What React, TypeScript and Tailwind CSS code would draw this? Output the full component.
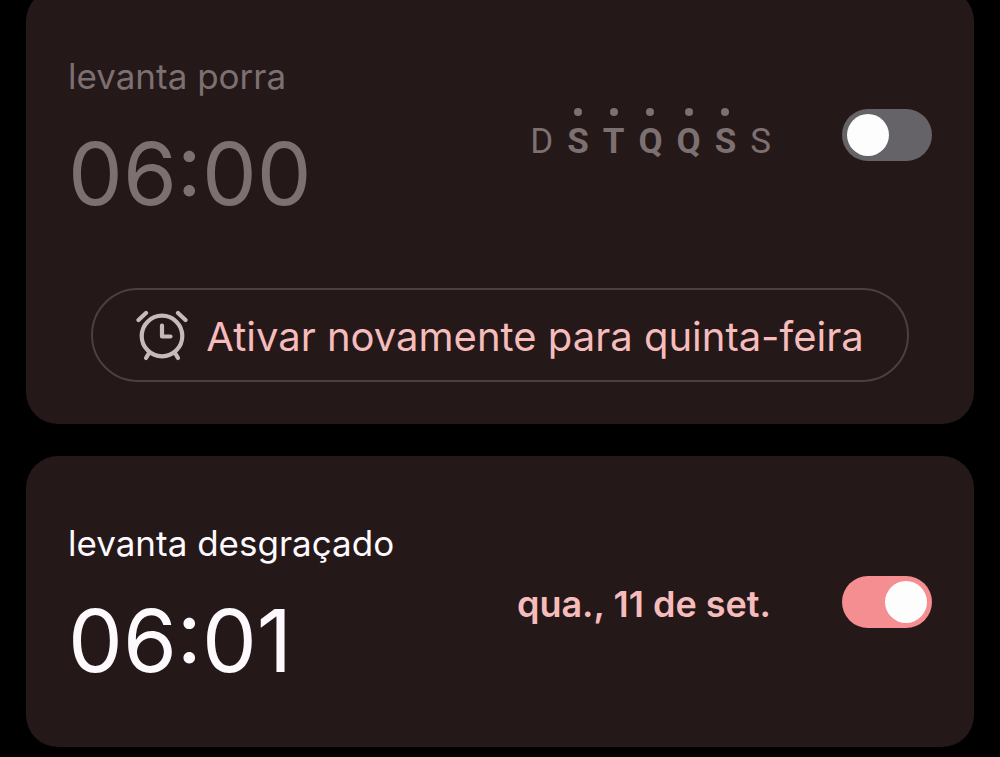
import { useState } from "react";

const days = [
  { letter: "D", name: "domingo", on: false },
  { letter: "S", name: "segunda-feira", on: true },
  { letter: "T", name: "terça-feira", on: true },
  { letter: "Q", name: "quarta-feira", on: true },
  { letter: "Q", name: "quinta-feira", on: true },
  { letter: "S", name: "sexta-feira", on: true },
  { letter: "S", name: "sábado", on: false },
];

function AlarmIcon() {
  return (
    <svg
      className="h-[52px] w-[52px] shrink-0"
      viewBox="0 0 52 52"
      fill="none"
      stroke="#c5bbba"
      strokeWidth="4.2"
      strokeLinecap="round"
      strokeLinejoin="round"
      aria-hidden="true"
    >
      <circle cx="26" cy="27" r="20.3" />
      <path d="M26 16.500v11h8.500M13 44l-3 5M39 44l3 5" />
      <path d="M2.500 11l7.500-7M49.500 11l-7.500-7" />
    </svg>
  );
}

function Switch({ label, initial }: { label: string; initial: boolean }) {
  const [on, setOn] = useState(initial);
  return (
    <input
      type="checkbox"
      role="switch"
      aria-label={label}
      checked={on}
      onChange={(e) => setOn(e.target.checked)}
      className="flex h-[52px] w-[90px] shrink-0 cursor-pointer appearance-none items-center rounded-full bg-[#656367] px-[5px] before:block before:size-[42px] before:rounded-full before:bg-[#fdfdfd] before:content-[''] checked:justify-end checked:bg-[#f48e90]"
    />
  );
}

function Days() {
  return (
    <ul className="flex gap-[14px] font-['Roboto',sans-serif] text-[35px] leading-[40px] text-[#7d7071]">
      {days.map((d) => (
        <li key={d.name} className="flex flex-col items-center">
          <span className={d.on ? "size-[8px] rounded-full bg-[#7d7071]" : "size-[8px]"} />
          <abbr title={d.name} className={d.on ? "mt-[6px] font-bold no-underline" : "mt-[6px] no-underline"}>
            {d.letter}
          </abbr>
        </li>
      ))}
    </ul>
  );
}

export default function App() {
  return (
    <div className="min-h-screen overflow-hidden bg-black font-['Inter',sans-serif]">
      <main className="-mt-[11px] flex flex-col gap-8 px-[26px] pb-[10px]">
        <article className="rounded-[32px] bg-[#241819] pb-[42px]">
          <div className="flex items-center px-[42px] py-[63px] text-[#7d7071]">
            <div className="flex flex-1 flex-col gap-[30px]">
              <h2 className="text-[35px] leading-[48px]">levanta porra</h2>
              <time className="text-[87px] leading-[87px]">06:00</time>
            </div>
            <Days />
            <div className="ml-[71px] flex">
              <Switch label="levanta porra" initial={false} />
            </div>
          </div>
          <div className="mt-[8px] flex px-[65px]">
            <button
              type="button"
              className="flex h-[94px] flex-1 cursor-pointer items-center justify-center gap-[18px] rounded-full border-2 border-[#4b3f40] text-[40px] leading-[48px] whitespace-nowrap text-[#f6bcbc]"
            >
              <AlarmIcon />
              <span className="pt-1">Ativar novamente para quinta-feira</span>
            </button>
          </div>
        </article>
        <article className="rounded-[32px] bg-[#241819]">
          <div className="flex items-center px-[42px] py-[63px] text-[#fdf9fd]">
            <div className="flex flex-1 flex-col gap-[30px]">
              <h2 className="text-[35px] leading-[48px]">levanta desgraçado</h2>
              <time className="text-[87px] leading-[87px]">06:01</time>
            </div>
            <p className="pt-1 text-[36px] leading-[48px] font-semibold text-[#f6bcbc]">qua., 11 de set.</p>
            <div className="ml-[71px] flex">
              <Switch label="levanta desgraçado" initial={true} />
            </div>
          </div>
        </article>
      </main>
    </div>
  );
}
